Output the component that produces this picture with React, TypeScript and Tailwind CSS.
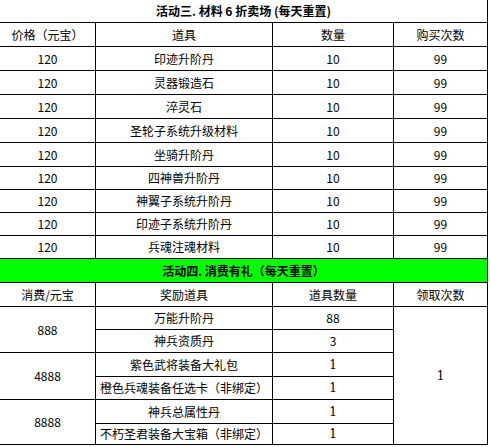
import React from "react";

function Cell({ children, className = "" }: { children?: React.ReactNode; className?: string }) {
  return (
    <div className={"bg-white flex items-center justify-center text-[12px] leading-none text-black whitespace-nowrap " + className}>
      {children}
    </div>
  );
}

function One() {
  return <span className="font-['DejaVu_Serif',serif]">1</span>;
}

const items1 = [
  "印迹升阶丹",
  "灵器锻造石",
  "淬灵石",
  "圣轮子系统升级材料",
  "坐骑升阶丹",
  "四神兽升阶丹",
  "神翼子系统升阶丹",
  "印迹子系统升阶丹",
  "兵魂注魂材料",
];

export default function App() {
  return (
    <div className="w-[490px] h-[447px] bg-white overflow-hidden font-['Noto_Sans_CJK_SC','Liberation_Sans',sans-serif]">
      <div className="w-[488px] bg-black pr-px pb-px grid gap-px grid-cols-[95px_176px_120px_93px] grid-rows-[22px_23px_23px_23px_23px_23px_23px_22px_22px_22px_22px_23px_23px_22px_22px_23px_22px_23px_20px]">
        <Cell className="col-span-4 font-bold">活动三. 材料 6 折卖场 (每天重置)</Cell>
        <Cell>价格（元宝）</Cell>
        <Cell>道具</Cell>
        <Cell>数量</Cell>
        <Cell>购买次数</Cell>
        {items1.map((it) => (
          <React.Fragment key={it}>
            <Cell>120</Cell>
            <Cell>{it}</Cell>
            <Cell>10</Cell>
            <Cell>99</Cell>
          </React.Fragment>
        ))}
        <div className="col-span-4 bg-[#00ff00] flex items-center justify-center text-[12px] leading-none font-bold text-black">
          活动四. 消费有礼（每天重置）
        </div>
        <Cell>消费/元宝</Cell>
        <Cell>奖励道具</Cell>
        <Cell>道具数量</Cell>
        <Cell>领取次数</Cell>

        <Cell className="row-span-2">888</Cell>
        <Cell>万能升阶丹</Cell>
        <Cell>88</Cell>
        <Cell className="row-span-6">
          <One />
        </Cell>
        <Cell>神兵资质丹</Cell>
        <Cell>3</Cell>

        <Cell className="row-span-2">4888</Cell>
        <Cell>紫色武将装备大礼包</Cell>
        <Cell>
          <One />
        </Cell>
        <Cell>橙色兵魂装备任选卡（非绑定）</Cell>
        <Cell>
          <One />
        </Cell>

        <Cell className="row-span-2">8888</Cell>
        <Cell>神兵总属性丹</Cell>
        <Cell>
          <One />
        </Cell>
        <Cell>不朽圣君装备大宝箱（非绑定）</Cell>
        <Cell>
          <One />
        </Cell>
      </div>
    </div>
  );
}
